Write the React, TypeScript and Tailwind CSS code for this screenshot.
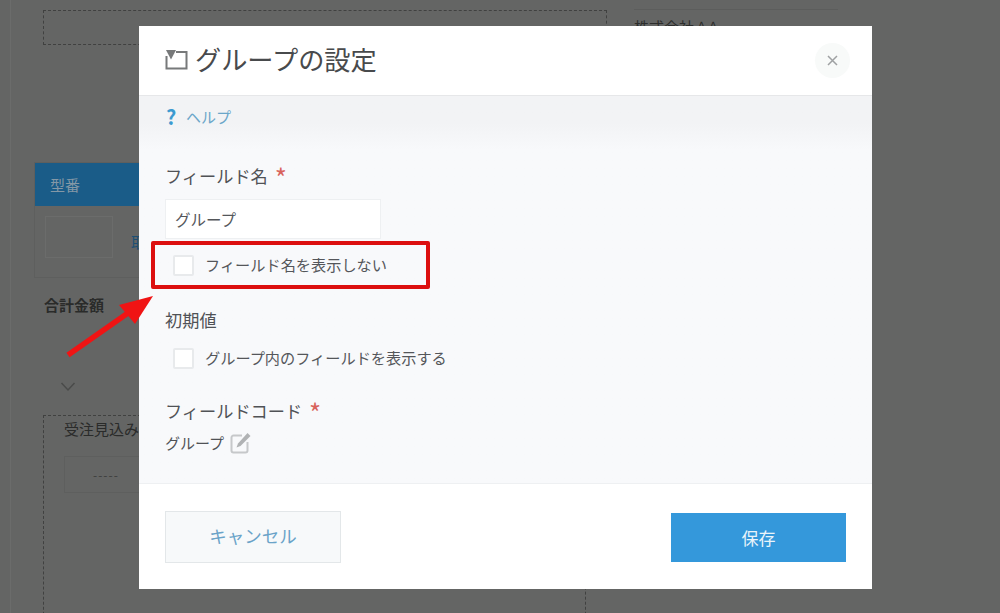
const jp = 'font-["Noto_Sans_CJK_JP","Noto_Sans",sans-serif]';

function GroupIcon() {
  return (
    <svg width="23" height="20" viewBox="0 0 23 20" className="mr-[7px] mt-[1px] shrink-0">
      <path d="M1.500 6v12.500h20V2H11" fill="none" stroke="#77797a" strokeWidth="2" />
      <path d="M1 0h10L6 9.500z" fill="#77797a" />
    </svg>
  );
}

function EditIcon() {
  return (
    <svg width="22" height="22" viewBox="0 0 22 22" className="ml-[6px]">
      <path d="M12 3.500H3.500a2 2 0 0 0-2 2v13a2 2 0 0 0 2 2h12a2 2 0 0 0 2-2V10" fill="none" stroke="#c6c8ca" strokeWidth="2" />
      <path d="M6.500 15.500l1.500-4L17.500 1l3 3-10 10z" fill="#b0b2b4" />
    </svg>
  );
}

function CheckRow({ label, className }: { label: string; className?: string }) {
  return (
    <label className={`flex items-center pl-2 ${className ?? ''}`}>
      <span className="h-[21px] w-[21px] rounded-[2px] border-2 border-[#e8eaec] bg-white" />
      <span className="ml-[11px] -translate-y-px text-[15.200px] leading-[21px] text-[#54565a]">{label}</span>
    </label>
  );
}

function Asterisk() {
  return <span className="ml-[3px] align-[-5px] text-[26px] leading-[10px] text-[#d8635b]">*</span>;
}

function BackgroundForm() {
  return (
    <>
      <div className="absolute left-[10px] top-0 h-full w-px bg-[#6b6c6b]" />
      <div className="absolute left-[43px] top-[10px] h-[35px] w-[564px] border border-dashed border-[#404140]" />
      <div className="absolute left-[634px] top-[9px] h-[40px] w-[204px] border-t border-[#5c5d5c] text-[15px] leading-[34px] text-[#2c2d2c]">
        株式会社 ^ ^
      </div>
      <div className="absolute left-[34px] top-[162px] h-[116px] w-[110px] border border-[#5e5f5e]">
        <div className="h-[43px] bg-[#1a5c88] pl-[15px] text-[15px] leading-[43px] text-[#8498a6]">型番</div>
        <div className="ml-[10px] mt-[10px] h-[42px] w-[68px] border border-[#6b6c6b]" />
      </div>
      <span className="absolute left-[131px] top-[231px] text-[15px] leading-[22px] text-[#1d4f73]">取</span>
      <span className="absolute left-[44px] top-[295px] text-[15px] font-bold leading-[20px] text-[#2a2b2a]">合計金額</span>
      <svg className="absolute left-[60px] top-[381px]" width="16" height="12" viewBox="0 0 16 12">
        <path d="M1.500 2l6.500 7 6.500-7" fill="none" stroke="#4a4b4a" strokeWidth="1.500" />
      </svg>
      <div className="absolute left-[43px] top-[415px] h-[220px] w-[543px] border border-dashed border-[#404140]">
        <div className="pl-5 pt-[2px] text-[15px] leading-[22px] text-[#2a2b2a]">受注見込み</div>
        <div className="ml-5 mt-[16px] flex h-[37px] w-[110px] items-center border border-[#5e5f5e] pl-7 text-[12px] tracking-[1px] text-[#3d3e3d]">
          -----
        </div>
      </div>
    </>
  );
}

function Arrow() {
  return (
    <svg className="absolute left-[60px] top-[290px]" width="100" height="72" viewBox="0 0 100 72">
      <path d="M8 65L68 23" stroke="#f01414" strokeWidth="5.500" fill="none" />
      <path d="M93 6L59 15 75 34z" fill="#f01414" />
    </svg>
  );
}

export default function App() {
  return (
    <div className={`relative h-[613px] w-[1000px] overflow-hidden bg-[#646564] ${jp}`}>
      <BackgroundForm />

      <div className="absolute left-[139px] top-[26px] flex h-[563px] w-[733px] flex-col bg-white">
        <header className="flex h-[70px] shrink-0 justify-between border-b border-[#e6e7e9] pl-[26px] pr-[22px]">
          <h1 className="mt-[15px] flex h-[36px] items-center text-[26.200px] font-normal leading-[36px] text-[#484a4c]">
            <GroupIcon />
            グループの設定
          </h1>
          <button className="mt-[17px] flex h-[35px] w-[35px] items-center justify-center rounded-full bg-[#f8faf9]">
            <svg width="11" height="11" viewBox="0 0 11 11">
              <path d="M1 1l9 9M10 1l-9 9" stroke="#9fa1a3" strokeWidth="1.500" />
            </svg>
          </button>
        </header>

        <div className="flex-1 bg-gradient-to-b from-[#f2f3f5] from-[7%] to-[#f8f9fb] to-[14%] pl-[26px]">
          <div className="flex h-[42px] items-center text-[15px] text-[#6ba6c9]">
            <span className="w-[21px] pl-[1px] text-[20px] font-bold leading-none text-[#3c9ad0]">?</span>
            ヘルプ
          </div>

          <div className="mt-[26px] text-[17.200px] leading-[24px] text-[#505256]">
            フィールド名 <Asterisk />
          </div>
          <div className="mt-[11px] h-[40px] w-[216px] border border-[#eef0f2] bg-white pl-[9px] text-[15.500px] leading-[38px] text-[#54565a]">
            グループ
          </div>
          <CheckRow label="フィールド名を表示しない" className="mt-[16px]" />

          <div className="mt-[32px] text-[17.200px] leading-[24px] text-[#505256]">初期値</div>
          <CheckRow label="グループ内のフィールドを表示する" className="mt-[16px]" />

          <div className="mt-[30px] text-[17.200px] leading-[24px] text-[#505256]">
            フィールドコード <Asterisk />
          </div>
          <div className="mt-[9px] flex items-center text-[15px] leading-[22px] text-[#505256]">
            グループ
            <EditIcon />
          </div>
        </div>

        <footer className="flex h-[106px] shrink-0 items-center justify-between border-t border-[#eef0f2] px-[26px]">
          <button className="h-[52px] w-[176px] border border-[#e3e7e9] bg-[#f7f9fa] text-[17.500px] text-[#6aa3c8]">
            キャンセル
          </button>
          <button className="mt-[2px] h-[49px] w-[175px] bg-[#3498db] text-[17px] text-[#e9f4fa]">保存</button>
        </footer>
      </div>

      <div className="absolute left-[151px] top-[241px] h-[48px] w-[279px] rounded-[2px] border-[4px] border-[#dc0f0f]" />
      <Arrow />
    </div>
  );
}
